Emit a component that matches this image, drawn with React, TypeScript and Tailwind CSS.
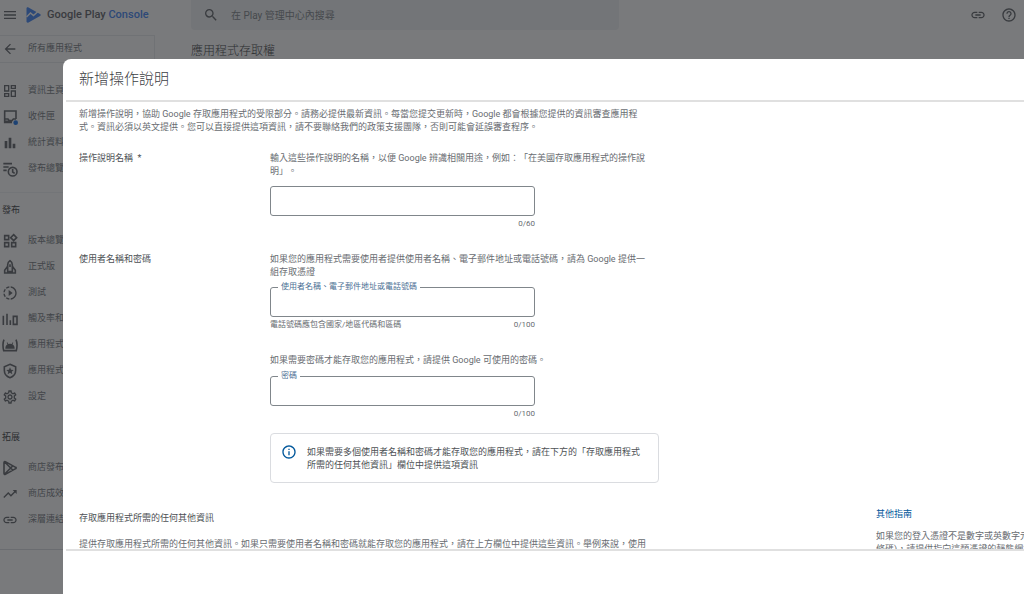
import type { ReactNode } from "react";
import {
  MdArrowBack,
  MdBarChart,
  MdHelpOutline,
  MdInfoOutline,
  MdLink,
  MdMenu,
  MdOutlineDashboard,
  MdOutlineSettings,
  MdSearch,
  MdSlowMotionVideo,
  MdTrendingUp,
} from "react-icons/md";

function Icon({ children }: { children: ReactNode }) {
  return (
    <svg
      viewBox="0 0 24 24"
      fill="none"
      stroke="currentColor"
      strokeWidth="2.4"
      className="w-4 h-4"
      aria-hidden="true"
    >
      {children}
    </svg>
  );
}

const InboxIcon = () => (
  <Icon>
    <path d="M15 20H4V3h17v12" />
    <path d="M4 15h5l2 2.500h4l2-2.500h4M4 18.500h11" />
    <circle cx="20.500" cy="20.500" r="3.500" fill="#1a73e8" stroke="none" />
  </Icon>
);

const PublishingIcon = () => (
  <Icon>
    <path d="M2 4h13M2 9h8M2 14h5" />
    <circle cx="16" cy="16" r="6.500" />
    <path d="M16 12v4.500l3 2" />
  </Icon>
);

const ReleasesIcon = () => (
  <Icon>
    <path d="M4 4h6v6H4zM4 14.500h6v6H4zM14.500 14.500h6v6h-6zM17.500 2.500L22 7l-4.500 4.500L13 7z" />
  </Icon>
);

const ProductionIcon = () => (
  <Icon>
    <path d="M8.500 19V8.500C8.500 5.500 10.500 3.500 12 2.500c1.500 1 3.500 3 3.500 6V19zM8.500 11L4 17v4h16v-4l-4.500-6" />
    <path d="M12 8v4" />
  </Icon>
);

const ReachIcon = () => (
  <Icon>
    <path d="M2 7v14M7.500 4v17M12.500 14v7M17 8h5.500v12H17z" />
  </Icon>
);

const BundleIcon = () => (
  <Icon>
    <path d="M3 4C1 8.500 1 14 2.500 20.500h19C23 14 23 8.500 21 4" />
    <path
      d="M5 17.500c0-3.500 1.500-5.500 3.300-6.500L7 8.500l1-.5 1.500 2.500a8 8 0 0 1 5 0L16 8l1 .500-1.300 2.500c1.800 1 3.300 3 3.300 6.500z"
      fill="currentColor"
      stroke="none"
    />
  </Icon>
);

const ShieldIcon = () => (
  <Icon>
    <path d="M12 2l8.500 3.500V11c0 5-3.500 9.500-8.500 11-5-1.500-8.500-6-8.500-11V5.500z" />
    <path
      d="M12 6.500l1.600 3.500 3.900.4-2.900 2.600.9 3.800-3.500-2-3.500 2 .9-3.800-2.900-2.600 3.900-.4z"
      fill="currentColor"
      stroke="none"
    />
  </Icon>
);

const StoreIcon = () => (
  <Icon>
    <path
      d="M3 4c0-1.500 1-2 2-1.500l15.500 8.500c1 .5 1 1.500 0 2L5 21.500c-1 .5-2 0-2-1.500zM4 3l12 12M4 21L16 9"
      strokeLinejoin="round"
    />
  </Icon>
);

const overview = [
  { label: "資訊主頁", icon: <MdOutlineDashboard size={16} /> },
  { label: "收件匣", icon: <InboxIcon /> },
  { label: "統計資料", icon: <MdBarChart size={16} /> },
  { label: "發布總覽", icon: <PublishingIcon /> },
];

const release = [
  { label: "版本總覽", icon: <ReleasesIcon /> },
  { label: "正式版", icon: <ProductionIcon /> },
  { label: "測試", icon: <MdSlowMotionVideo size={16} /> },
  { label: "觸及率和", icon: <ReachIcon /> },
  { label: "應用程式", icon: <BundleIcon /> },
  { label: "應用程式", icon: <ShieldIcon /> },
  { label: "設定", icon: <MdOutlineSettings size={16} /> },
];

const grow = [
  { label: "商店發布", icon: <StoreIcon /> },
  { label: "商店成效", icon: <MdTrendingUp size={16} /> },
  { label: "深層連結", icon: <MdLink size={16} /> },
];

function NavGroup({ items }: { items: { label: string; icon: ReactNode }[] }) {
  return (
    <ul>
      {items.map((item, i) => (
        <li key={i}>
          <a href="#" className="flex items-center gap-[10px] h-[26px] pl-0.5 whitespace-nowrap">
            {item.icon}
            <span className="text-[#757a80]">{item.label}</span>
          </a>
        </li>
      ))}
    </ul>
  );
}

function Sidebar() {
  return (
    <nav className="w-[191px] shrink-0 text-[9px] text-[#5f6368]">
      <div className="flex items-center h-[30px] pl-0.5">
        <button type="button" aria-label="選單">
          <MdMenu size={16} />
        </button>
        <svg viewBox="0 0 30 32" className="w-[15px] h-4 ml-2" aria-hidden="true">
          <path d="M1 3C1 1 3 0 5 1l23 13c2 1 2 3 0 4L5 31c-2 1-4 0-4-2z" fill="#4285f4" />
          <path d="M1 20l8-8 6 5 9-8" fill="none" stroke="#fff" strokeWidth="3" />
        </svg>
        <span className="ml-1.5 text-[11px] font-medium whitespace-nowrap">
          Google Play <span className="text-[#4285f4]">Console</span>
        </span>
      </div>
      <div className="w-[155px] mt-[5px] border-y border-[#e8eaed]">
        <a href="#" className="flex items-center gap-[10px] h-[26px] pl-0.5 border-r border-[#e8eaed]">
          <MdArrowBack size={16} />
          <span className="text-[#757a80]">所有應用程式</span>
        </a>
      </div>
      <div className="pt-[15px]">
        <NavGroup items={overview} />
      </div>
      <div className="mt-[10px] pt-2 border-t border-[#f1f3f4]">
        <h2 className="h-[19px] mb-[8px] pl-0.5 leading-[19px] text-[#3c4043]">發布</h2>
        <NavGroup items={release} />
      </div>
      <div className="pt-[18px] pb-[16px] border-b border-[#dadce0]">
        <h2 className="h-[19px] mb-[8px] pl-0.5 leading-[19px] text-[#3c4043]">拓展</h2>
        <NavGroup items={grow} />
      </div>
    </nav>
  );
}

type FieldProps = { id: string; name: string; floating?: string; hint?: string; counter: string };

function Field({ id, name, floating, hint, counter }: FieldProps) {
  return (
    <div className="w-[265px]">
      <div className="relative">
        <input
          id={id}
          type="text"
          aria-label={floating ? undefined : name}
          className="block w-full h-[30px] px-2.5 text-[10px] rounded-[3px] border border-[#80868b] bg-white"
        />
        {floating && (
          <label
            htmlFor={id}
            className="absolute left-2 -top-1.5 px-[3px] bg-white text-[8px] leading-3 text-[#4b6f94]"
          >
            {floating}
          </label>
        )}
      </div>
      <div className="flex justify-between text-[8px] leading-4">
        <span>{hint}</span>
        <span>{counter}</span>
      </div>
    </div>
  );
}

function Dialog() {
  return (
    <section
      role="dialog"
      aria-labelledby="dialog-title"
      className="fixed left-[63px] top-[59px] right-0 bottom-0 flex flex-col bg-white rounded-tl-lg text-[9px] leading-[13px] text-[#686c71]"
    >
      <header className="h-[43px] shrink-0 pl-[3px]">
        <div className="flex items-center h-full pl-[13px] border-b-2 border-[#e0e0e0]">
          <h1 id="dialog-title" className="text-[15px] font-light text-[#3c4043]">
            新增操作說明
          </h1>
        </div>
      </header>

      <div className="flex-1 min-h-0 overflow-hidden flex justify-between pl-4 pt-1.5">
        <form className="w-[580px] shrink-0 whitespace-nowrap">
          <p>
            新增操作說明，協助 Google 存取應用程式的受限部分。請務必提供最新資訊。每當您提交更新時，Google 都會根據您提供的資訊審查應用程
            <br />
            式。資訊必須以英文提供。您可以直接提供這項資訊，請不要聯絡我們的政策支援團隊，否則可能會延誤審查程序。
          </p>

          <div className="flex mt-[18px]">
            <h2 className="w-[191px] shrink-0 text-[#4d5155]">操作說明名稱 &nbsp;*</h2>
            <div>
              <p className="mb-2">
                輸入這些操作說明的名稱，以便 Google 辨識相關用途，例如：「在美國存取應用程式的操作說
                <br />
                明」。
              </p>
              <Field id="name" name="操作說明名稱" counter="0/60" />
            </div>
          </div>

          <div className="flex mt-[21px]">
            <h2 className="w-[191px] shrink-0 text-[#4d5155]">使用者名稱和密碼</h2>
            <div className="flex-1">
              <p className="mb-2">
                如果您的應用程式需要使用者提供使用者名稱、電子郵件地址或電話號碼，請為 Google 提供一
                <br />
                組存取憑證
              </p>
              <Field
                id="username"
                name="使用者名稱"
                floating="使用者名稱、電子郵件地址或電話號碼"
                hint="電話號碼應包含國家/地區代碼和區碼"
                counter="0/100"
              />
              <p className="mt-[21px] mb-[9px]">
                如果需要密碼才能存取您的應用程式，請提供 Google 可使用的密碼。
              </p>
              <Field id="password" name="密碼" floating="密碼" counter="0/100" />
              <div className="flex gap-[10px] mt-[11px] pl-[10px] py-[10px] rounded border border-[#dadce0] text-[#4d5155]">
                <MdInfoOutline size={16} className="text-[#01579b]" />
                <p className="pt-0.5">
                  如果需要多個使用者名稱和密碼才能存取您的應用程式，請在下方的「存取應用程式
                  <br />
                  所需的任何其他資訊」欄位中提供這項資訊
                </p>
              </div>
            </div>
          </div>

          <h2 className="mt-[29px] text-[#4d5155]">存取應用程式所需的任何其他資訊</h2>
          <p className="mt-[13px]">
            提供存取應用程式所需的任何其他資訊。如果只需要使用者名稱和密碼就能存取您的應用程式，請在上方欄位中提供這些資訊。舉例來說，使用
          </p>
        </form>

        <aside className="w-[148px] shrink-0 overflow-hidden whitespace-nowrap pt-[400px]">
          <a href="#" className="block text-[#01579b]">
            其他指南
          </a>
          <p className="mt-[9px]">
            如果您的登入憑證不是數字或英數字元
            <br />
            條碼)，請提供指向這類憑證的靜態網址
          </p>
        </aside>
      </div>

      <footer className="h-[45px] shrink-0 pl-[3px]">
        <div className="border-t-2 border-[#e0e0e0]" />
      </footer>
    </section>
  );
}

export default function App() {
  return (
    <div
      lang="zh-Hant"
      className="h-screen overflow-hidden bg-white font-['Roboto','Noto_Sans_CJK_TC',sans-serif] [text-spacing-trim:space-all]"
    >
      <div className="flex">
        <Sidebar />
        <main className="flex-1 text-[#5f6368]">
          <header className="flex items-start justify-between">
            <div className="flex items-center gap-3 flex-1 max-w-[428px] h-[30px] pl-3 rounded-b bg-[#f1f3f4]">
              <MdSearch size={16} />
              <input
                type="search"
                aria-label="搜尋"
                placeholder="在 Play 管理中心內搜尋"
                className="flex-1 text-[10px] placeholder:text-[#80868b]"
              />
            </div>
            <div className="flex items-center gap-[15px] h-[30px] pr-[7px]">
              <button type="button" aria-label="複製連結">
                <MdLink size={16} />
              </button>
              <button type="button" aria-label="說明">
                <MdHelpOutline size={16} />
              </button>
            </div>
          </header>
          <h1 className="mt-3 text-[12px] leading-[18px] font-light text-[#3c4043]">應用程式存取權</h1>
        </main>
      </div>
      <div className="fixed inset-0 bg-[#202124]/60" />
      <Dialog />
    </div>
  );
}
